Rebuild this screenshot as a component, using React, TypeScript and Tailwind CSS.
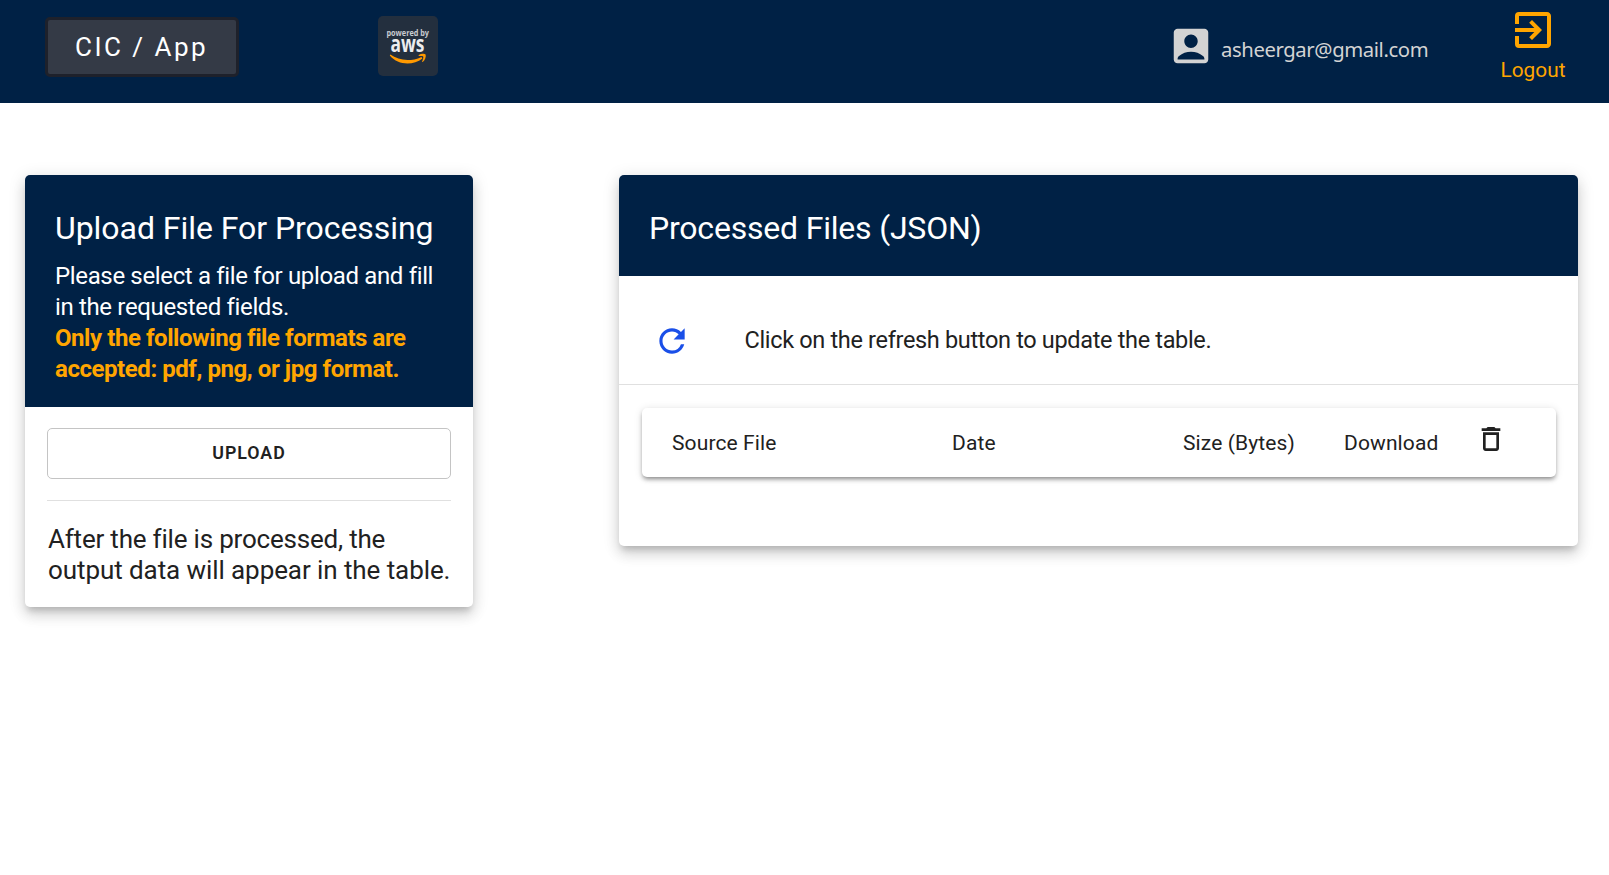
import { MdAccountBox, MdDeleteOutline, MdExitToApp, MdRefresh } from "react-icons/md";

const cardShadow =
  "shadow-[0_6px_6px_-3px_rgba(0,0,0,0.16),0_9px_14px_0_rgba(0,0,0,0.11),0_3px_16px_2px_rgba(0,0,0,0.1)]";
const tableShadow =
  "shadow-[0_3px_4px_-2px_rgba(0,0,0,0.34),0_3px_4px_0_rgba(0,0,0,0.16),0_1px_9px_0_rgba(0,0,0,0.12)]";

function AwsBadge() {
  return (
    <svg className="ml-[139px] mt-4 size-15 shrink-0" viewBox="0 0 60 60">
      <rect width="60" height="60" rx="5" fill="#232f3e" />
      <text x="8.500" y="19.800" textLength="42.500" lengthAdjust="spacingAndGlyphs" fontSize="9" fontWeight="700" fontFamily="Open Sans, sans-serif" fill="#c8cbd0">
        powered by
      </text>
      <text x="12.500" y="35.500" textLength="34" lengthAdjust="spacingAndGlyphs" fontSize="22.500" fontWeight="700" fontFamily="Open Sans, sans-serif" fill="#ececee">
        aws
      </text>
      <path d="M12.300 38.600c8.500 5.800 19.500 7.600 31.200 2.300l.9 1.500c-9.500 7.300-24.400 6.800-32.600-3z" fill="#f90" />
      <path d="M40.600 39.300c2-1.500 6-1.900 7-.9.700 2.200-.6 5.800-2.900 7.600l-.7-.3c.8-2 1.700-4.400 1.200-5.200-.8-.8-2.800-.6-4.500-.4z" fill="#f90" />
    </svg>
  );
}

function Header() {
  return (
    <header className="flex h-[103px] items-start bg-[#002145]">
      <div className="ml-[45px] mt-[17px] flex h-15 w-[194px] items-center rounded-[5px] border-3 border-[#1e212b] bg-[#343a46] pl-[27px] text-[26px] leading-none tracking-[2.5px] text-white">
        CIC / App
      </div>
      <AwsBadge />
      <div className="ml-auto mt-[23px] flex">
        <MdAccountBox className="size-[46px] text-[#d3d3d3]" />
        <span className="ml-[7px] mt-3 w-[280px] font-['Noto_Sans',sans-serif] text-[20.3px] leading-7 tracking-[-0.4px] text-[#d3d3d3]">
          asheergar@gmail.com
        </span>
      </div>
      <div className="mr-11 mt-1.5 flex w-[64px] flex-col items-center text-[#ffa500]">
        <MdExitToApp className="size-12" />
        <span className="mt-1 text-[20.8px] leading-6">Logout</span>
      </div>
    </header>
  );
}

function UploadCard() {
  return (
    <section className={`w-[448px] overflow-hidden rounded-[5px] bg-white ${cardShadow}`}>
      <div className="h-[232px] bg-[#002145] pl-[30px] pt-8 text-white">
        <h2 className="text-[32px] leading-[42px] tracking-[-0.05px]">Upload File For Processing</h2>
        <p className="mt-3 text-[24px] leading-[31px] tracking-[-0.35px]">
          Please select a file for upload and fill
          <br />
          in the requested fields.
        </p>
        <p className="text-[24px] font-bold leading-[31px] tracking-[-0.44px] text-[#ffa500]">
          Only the following file formats are
          <br />
          accepted: pdf, png, or jpg format.
        </p>
      </div>
      <div className="px-[22px] pt-[21px]">
        <button className="block h-[51px] w-full rounded-[5px] border border-[#c4c4c4] pb-px text-[17.8px] font-semibold tracking-[0.95px] text-[#212121]">
          UPLOAD
        </button>
        <hr className="mt-[21px] border-[#e0e0e0]" />
        <p className="ml-px mt-[23px] whitespace-nowrap text-[26px] leading-[31px] tracking-[-0.08px] text-[#212121]">
          <span className="tracking-[-0.2px]">After the file is processed, the</span>
          <br />
          output data will appear in the table.
        </p>
      </div>
      <div className="h-[21px]" />
    </section>
  );
}

function ProcessedCard() {
  return (
    <section className={`h-[371px] w-[959px] overflow-hidden rounded-[5px] bg-white text-[#212121] ${cardShadow}`}>
      <div className="h-[101px] bg-[#002145] pl-[30px] pt-8 text-white">
        <h2 className="text-[32px] leading-[42px] tracking-[-0.2px]">Processed Files (JSON)</h2>
      </div>
      <div className="flex h-[109px] items-center border-b border-[#e0e0e0] pl-[34px] pt-5">
        <MdRefresh className="mt-px size-[38px] text-[#1a4fe8]" />
        <span className="ml-[53.5px] mt-0.5 text-[23.5px] tracking-[-0.33px]">
          Click on the refresh button to update the table.
        </span>
      </div>
      <div
        className={`ml-[23px] mt-[23px] grid h-[69px] w-[914px] grid-cols-[280px_231px_161px_131px_1fr] items-center rounded-[5px] bg-white pl-[30px] text-[21px] tracking-[0.12px] ${tableShadow}`}
      >
        <span className="mt-0.5">Source File</span>
        <span className="mt-0.5">Date</span>
        <span className="mt-0.5">Size (Bytes)</span>
        <span className="mt-0.5">Download</span>
        <MdDeleteOutline className="-mt-2 size-8" />
      </div>
    </section>
  );
}

export default function App() {
  return (
    <div className="h-[875px] w-[1609px] overflow-hidden bg-white font-[Roboto,sans-serif]">
      <Header />
      <main className="flex items-start justify-between pl-[25px] pr-[31px] pt-[72px]">
        <UploadCard />
        <ProcessedCard />
      </main>
    </div>
  );
}
